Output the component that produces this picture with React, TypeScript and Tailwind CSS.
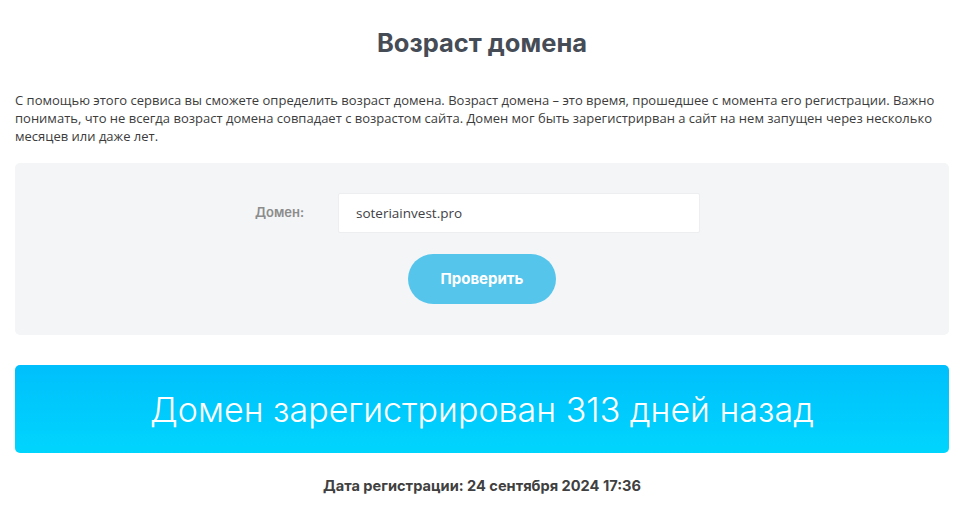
export default function App() {
  return (
    <div className="bg-white w-[973px] h-[511px] overflow-hidden font-['Open_Sans',sans-serif]">
      <div className="ml-[15px] w-[934px]">
        <h1 className="pt-[28px] text-center text-[25.5px] leading-[30px] font-bold text-[#464c55] font-['Inter',sans-serif]">
          Возраст домена
        </h1>

        <p className="mt-[33px] text-[13px] leading-[18px] text-[#3c3c3c]">
          С помощью этого сервиса вы сможете определить возраст домена. Возраст домена – это время, прошедшее с момента его регистрации. Важно понимать, что не всегда возраст домена совпадает с возрастом сайта. Домен мог быть зарегистрирван а сайт на нем запущен через несколько месяцев или даже лет.
        </p>

        <div className="mt-[18px] h-[172px] rounded-[5px] bg-[#f3f5f6] pt-[30px] flex flex-col items-center">
          <div className="flex items-center mr-[9px]">
            <label className="w-[83px] text-[13px] font-semibold text-[#8c8c8c] font-['Inter',sans-serif]">
              Домен:
            </label>
            <input
              readOnly
              value="soteriainvest.pro"
              className="w-[362px] h-[40px] rounded-[2px] border border-[#eceeef] bg-white px-[17px] text-[13.5px] text-[#3f3f46] outline-none"
            />
          </div>
          <button className="mt-[21px] w-[148px] h-[50px] rounded-full bg-[#56c5ec] text-white text-[15px] font-bold font-['Inter',sans-serif]">
            Проверить
          </button>
        </div>

        <div className="mt-[30px] h-[88px] rounded-[5px] bg-gradient-to-b from-[#00bffc] to-[#00d5fd] flex items-center justify-center">
          <span className="text-white text-[34px] font-light font-['Inter',sans-serif]">
            Домен зарегистрирован 313 дней назад
          </span>
        </div>

        <p className="mt-[23px] text-center text-[14.6px] font-bold text-[#404040] font-['Inter',sans-serif]">
          Дата регистрации: 24 сентября 2024 17:36
        </p>
      </div>
    </div>
  );
}
